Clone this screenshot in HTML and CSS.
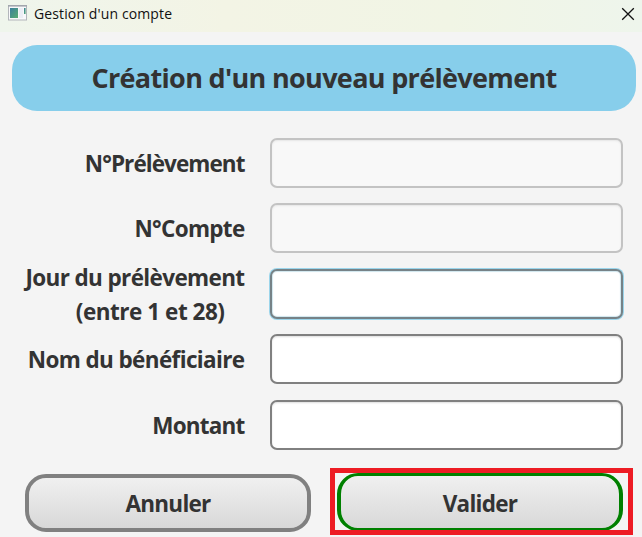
FILE: index.html
```html
<!DOCTYPE html>
<html lang="fr">
<head>
<meta charset="utf-8">
<title>Gestion d'un compte</title>
<link rel="stylesheet" href="styles.css">
</head>
<body>
<header class="titlebar">
  <svg class="app-icon" width="20" height="16" viewBox="0 0 20 16">
    <defs><linearGradient id="pane" x1="0" y1="0" x2="1" y2="1"><stop offset="0" stop-color="#3b7f9d"/><stop offset="1" stop-color="#58ad72"/></linearGradient></defs>
    <rect x=".5" y=".5" width="18" height="14.5" fill="#f8f8fa" stroke="#b3b6bb"/>
    <path d="M0 .8h19" stroke="#a2a6ad" stroke-width="1.6"/>
    <rect x="2" y="3" width="8" height="10" fill="url(#pane)"/>
    <rect x="11" y="3" width="4" height="10" fill="#eceef5"/>
    <rect x="16" y="3" width="1.6" height="6" fill="url(#pane)"/>
  </svg>
  <span class="window-title">Gestion d'un compte</span>
  <svg class="close" width="14" height="14" viewBox="0 0 14 14"><path d="M1.2 1.2l11.6 11.6M12.8 1.2L1.2 12.8" stroke="#111" stroke-width="1.3"/></svg>
</header>
<main>
  <h1 class="banner"><span>Création d'un nouveau prélèvement</span></h1>
  <form class="form">
    <label class="label prelevement" for="a">N°Prélèvement</label><input class="field" id="a" disabled>
    <label class="label compte" for="b">N°Compte</label><input class="field" id="b" disabled>
    <label class="label jour" for="c"><span>Jour du prélèvement</span><span class="hint">(entre 1 et 28)</span></label><input class="field active" id="c">
    <label class="label nom" for="d">Nom du bénéficiaire</label><input class="field" id="d">
    <label class="label montant" for="e">Montant</label><input class="field" id="e">
  </form>
  <div class="actions">
    <button class="button cancel" type="button">Annuler</button>
    <div class="highlight"><button class="button submit" type="button">Valider</button></div>
  </div>
</main>
</body>
</html>
```
FILE: styles.css
```css
* { box-sizing: border-box; }
body {
  margin: 0;
  height: 537px;
  overflow: hidden;
  background: #f4f4f4;
  color: #333;
  font-family: "Open Sans", "Noto Sans", sans-serif;
}
.titlebar {
  display: flex;
  align-items: center;
  height: 32px;
  padding: 0 7px 5px 8px;
  background: linear-gradient(90deg, #eff5ec, #f3f4e5 35%, #f1f5e5 70%, #eef5ec);
}
.app-icon { flex: none; margin: -1px 6px 0 0; }
.window-title {
  flex: 1;
  color: #111;
  font-size: 14px;
  line-height: 20px;
  letter-spacing: 0.12px;
}
.banner {
  display: flex;
  align-items: center;
  justify-content: center;
  height: 66px;
  margin: 13px 6px 0 12px;
  border-radius: 25px;
  background: #87ceeb;
  font-size: 27px;
  font-weight: 700;
  line-height: 36px;
  letter-spacing: -0.67px;
  white-space: nowrap;
}
.form {
  display: grid;
  grid-template-columns: 220px 353px;
  grid-auto-rows: 50px;
  gap: 15.5px 25px;
  margin: 26.9px 0 0 25px;
}
.label {
  display: flex;
  flex-direction: column;
  align-items: flex-end;
  justify-content: center;
  padding: 2px 0.5px 0 0;
  font-size: 22.5px;
  font-weight: 700;
  line-height: 34px;
  letter-spacing: -0.63px;
  white-space: nowrap;
}
.jour { padding-top: 3px; }
.prelevement { letter-spacing: -0.93px; }
.compte { letter-spacing: -0.7px; }
.montant { letter-spacing: -0.8px; }
.hint { margin-right: 20px; letter-spacing: -0.47px; }
.field {
  width: 353px;
  height: 50px;
  margin: 0;
  border: 2px solid #808080;
  border-radius: 7px;
  outline: none;
  background: #fff;
  box-shadow: inset 0 1px 2px #ddd;
}
.field:disabled {
  border-color: #c3c3c3;
  background: #f8f8f8;
  box-shadow: inset 0 1px 2px #e6e6e6;
}
.field.active {
  border-color: #768287;
  box-shadow: 0 0 0 1px #9bd5eb, inset 0 0 1px 1px #cfe6ee;
}
.actions {
  display: flex;
  align-items: flex-start;
  gap: 19px;
  margin: 18px 0 0 25px;
}
.button {
  width: 286px;
  height: 58px;
  padding: 2px 0 0;
  border: 4px solid #808080;
  border-radius: 21px;
  background: linear-gradient(#f0f0f0, #d8d8d8) padding-box;
  color: #333;
  font: 700 22.5px/34px "Open Sans", "Noto Sans", sans-serif;
  letter-spacing: -0.72px;
}
.cancel { margin-top: 6px; }
.highlight {
  width: 303px;
  height: 67px;
  border: 5px solid #ed1c24;
  overflow: hidden;
}
.submit {
  display: block;
  margin-left: 2px;
  border-color: #008000;
  border-top-width: 3px;
  border-bottom-width: 3px;
  padding-top: 4px;
}
```
